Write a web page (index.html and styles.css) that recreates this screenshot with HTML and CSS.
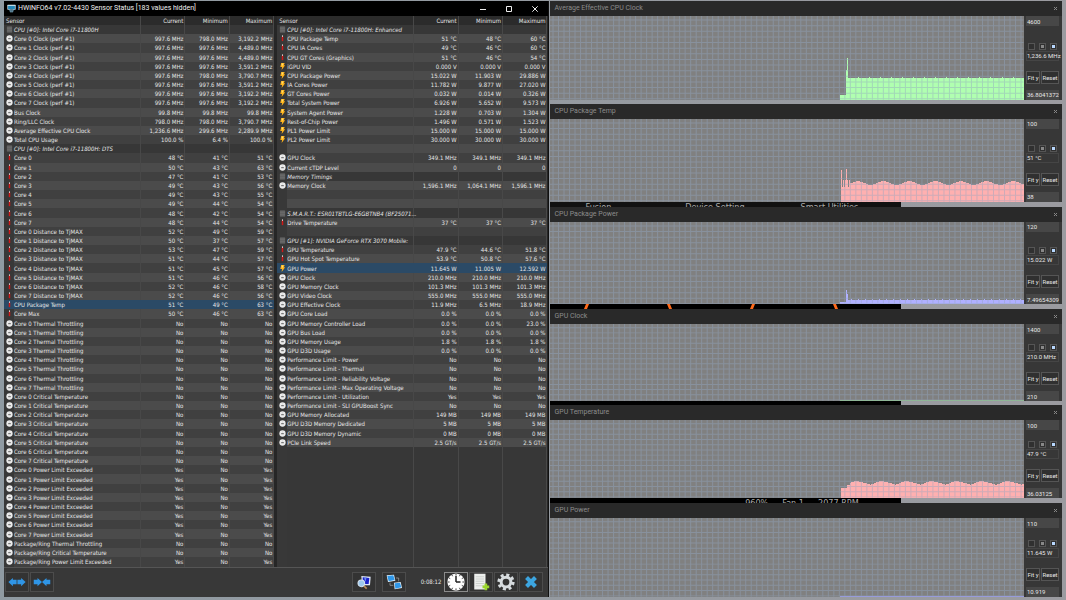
FILE: index.html
```html
<!DOCTYPE html>
<html lang="en">
<head>
    <meta charset="UTF-8">
    <title>HWiNFO64 Sensor Status</title>
    <link rel="stylesheet" href="styles.css">
</head>
<body>
<svg class="defs" aria-hidden="true">
    <symbol id="clock" viewBox="0 0 16 16"><circle cx="8" cy="8" r="7.2" fill="#ececec"/><path d="M5 8.400h6" stroke="#666" stroke-width="2.400"/><path d="M8 2.500v4" stroke="#ccc" stroke-width="1"/></symbol>
    <symbol id="temp" viewBox="0 0 16 16"><path d="M8 1v5" stroke="#eee" stroke-width="2.400"/><path d="M8 4v10" stroke="#d01818" stroke-width="3.400"/></symbol>
    <symbol id="power" viewBox="0 0 16 16"><path d="M5 0h8l-2 5h3L6 16l1-7H3z" fill="#ffb31a"/><path d="M6 1h4l-3 7z" fill="#ffe27a"/></symbol>
    <symbol id="chip" viewBox="0 0 16 16"><rect x="2" y="1" width="12" height="14" rx="1" fill="#6b6b6b"/><path d="M2 4h12M2 8h12M2 12h12" stroke="#565656" stroke-width="1"/></symbol>
</svg>

<div class="desktop">
    <main class="sensors">
        <header class="titlebar">
            <svg class="logo" viewBox="0 0 24 24"><rect x="1" y="2" width="22" height="13" rx="1" fill="#d5e9f2"/><rect x="3" y="5" width="18" height="9" fill="#2487b8"/><path d="M6 14h12l-2 8H8z" fill="#8cc4dc"/><path d="M9 14v7M12 14v7M15 14v7" stroke="#123" stroke-width="1.400"/></svg>
            <h1>HWiNFO64 v7.02-4430 Sensor Status [183 values hidden]</h1>
            <button class="win" aria-label="Minimize"><svg viewBox="0 0 10 10"><path d="M2 5.500h6"/></svg></button>
            <button class="win" aria-label="Maximize"><svg viewBox="0 0 10 10"><path d="M2.500 2.500h5v5h-5z"/></svg></button>
            <button class="win" aria-label="Close"><svg viewBox="0 0 10 10"><path d="M2.300 2.300l5.400 5.400M7.700 2.300L2.300 7.700"/></svg></button>
        </header>
        <div class="panes">
            <table id="left"></table>
            <table id="right"></table>
        </div>
        <footer class="toolbar">
            <button class="tool" aria-label="Expand columns"><svg viewBox="0 0 48 24"><path d="M1 12L13 1v5h10v12H13v5zM47 12L35 1v5H25v12h10v5z" fill="#2f95e6"/></svg></button>
            <button class="tool" aria-label="Shrink columns"><svg viewBox="0 0 48 24"><path d="M24 12L12 1v5H2v12h10v5zM24 12L36 1v5h10v12H36v5z" fill="#2f95e6"/></svg></button>
            <span class="space"></span>
            <button class="tool apart" aria-label="Summary"><svg viewBox="0 0 24 24"><path d="M8 3l14 1-1 13H9z" fill="#dfe6f5"/><path d="M10 5l10 1-1 9H10z" fill="#1b22c8"/><path d="M12 5l4 0-2 7z" fill="#6d8cf0"/><circle cx="8" cy="14" r="5" fill="#9ec9ee" stroke="#d7e4f0" stroke-width="1.600"/><path d="M12 18l4 4" stroke="#b88a58" stroke-width="2.600"/></svg></button>
            <button class="tool apart" aria-label="Network"><svg viewBox="0 0 24 24"><path d="M1 2l11-1 2 9-11 2z" fill="#eaf4fb"/><path d="M2 3l9-1 2 7-9 2z" fill="#2f97e8"/><path d="M12 13l10-1 2 9-11 2z" fill="#eaf4fb"/><path d="M13 14l8-1 2 7-9 2z" fill="#2f97e8"/><path d="M15 6h4v5M6 13v4h5" stroke="#aaa" fill="none"/></svg></button>
            <time>0:08:12</time>
            <button class="tool on" aria-label="Reset clock"><svg viewBox="0 0 24 24"><circle cx="12" cy="12" r="11.500" fill="#fff"/><path d="M12 12V4M12 12h6" stroke="#222" stroke-width="2"/><path d="M12 1v2.500M12 20.500v2.500M1 12h2.500M20.500 12H23M6.500 2.500l1 1.800M17.500 2.500l-1 1.800M2.500 6.500l1.800 1M21.500 6.500l-1.800 1M2.500 17.500l1.800-1M21.500 17.500l-1.800-1M6.500 21.500l1-1.800M17.500 21.500l-1-1.800" stroke="#333" stroke-width="1.200"/></svg></button>
            <button class="tool" aria-label="Save log"><svg viewBox="0 0 24 24"><path d="M3 1h15v21H3z" fill="#eceeec"/><path d="M5 5h11M5 8h11M5 11h11M5 14h11M5 17h11" stroke="#c3c7c3"/><path d="M14 18.500h9M18.500 14v9" stroke="#9bd62c" stroke-width="3.600"/></svg></button>
            <button class="tool" aria-label="Settings"><svg viewBox="0 0 24 24"><circle cx="12" cy="12" r="9.500" fill="none" stroke="#d7dcdf" stroke-width="4" stroke-dasharray="4 3.460"/><circle cx="12" cy="12" r="6.500" fill="none" stroke="#d7dcdf" stroke-width="4"/></svg></button>
            <button class="tool" aria-label="Close sensors"><svg viewBox="0 0 24 24"><path d="M8 8l8 8M16 8l-8 8" stroke="#3ca5e0" stroke-width="5.500" stroke-linecap="square"/></svg></button>
        </footer>
    </main>
    <div class="graphs" id="graphs"></div>
</div>
<script src="script.js"></script>
</body>
</html>
```
FILE: styles.css
```css
* { margin: 0; padding: 0; box-sizing: border-box; }
body {
    font-family: "DejaVu Sans Condensed", "Liberation Sans", sans-serif;
    font-size: 6px;
    line-height: 9px;
    color: #e6e6e6;
    background: #8f959c;
}
button, input { font: inherit; color: inherit; }
svg { display: block; }
.defs { position: absolute; width: 0; height: 0; }

.desktop {
    display: grid;
    grid-template-columns: minmax(0, 546fr) minmax(0, 512fr);
    gap: 1px;
    min-height: 100vh;
    padding: 1px 4px 3px 4px;
    background: linear-gradient(90deg, #8f9aa2 0%, #9b9ba0 100%);
}

/* sensor window */
.sensors {
    display: flex;
    flex-direction: column;
    background: #383838;
    border-right: 1px solid #111;
}
.titlebar {
    display: flex;
    align-items: center;
    height: 15px;
    padding-left: 3px;
    background: #000;
}
.logo { width: 9px; height: 9px; margin-right: 2px; }
h1, h2 {
    font: 7px/15px Roboto, "Open Sans", sans-serif;
}
h1 { flex: 1; color: #f0f0f0; }
.win { width: 26px; height: 15px; background: none; border: 0; }
.win svg { width: 10px; height: 10px; margin: 0 auto; fill: none; stroke: #eee; stroke-width: 1; }

.panes {
    flex: 1;
    display: grid;
    grid-template-columns: 1fr 1fr;
    gap: 3px;
    padding-right: 1px;
    background: #262626;
    border-bottom: 1px solid #555;
}
table {
    width: 100%;
    height: 100%;
    table-layout: fixed;
    border-spacing: 0;
    background: #383838;
}
col.ico { width: 10px; }
col.label { width: 47%; }
th { font-weight: normal; text-align: left; background: #2b2b2b; }
th, td {
    height: 9px;
    white-space: nowrap;
    border-right: 1px solid #484848;
}
th.name { padding-left: 2px; }
.num { text-align: right; padding-right: 1px; }
td { background: #404040; }
.odd td { background: #4b4b4b; }
.group td, .void td { background: #373737; }
.group .name { font-style: italic; }
tr td.ico { background: #383838; border-right: 0; }
.ico svg { width: 7px; height: 7px; margin: 0 auto; }
tr.sel td { background: #2b4a66; border-color: #2b4a66; }

.toolbar { display: flex; align-items: center; height: 29px; padding: 0 4px 2px 1px; }
.tool {
    width: 24px;
    height: 20px;
    margin-right: 1px;
    background: #333;
    border: 1px solid #4c4c4c;
}
.tool svg { width: 18px; height: 18px; margin: 0 auto; }
.apart { margin-right: 6px; }
.apart svg { width: 16px; height: 16px; }
.on { border-color: #8b8b8b; }
.space { flex: 1; }
time { margin: 0 3px 0 9px; }

/* graph windows */
.graphs {
    display: grid;
    grid-template-rows: 99fr 4px 98fr 5px 98fr 5px 92fr 4px 93fr 5px 94fr;
}
.graph { display: flex; flex-direction: column; min-height: 0; background: #373737; }
.graph header {
    display: flex;
    justify-content: space-between;
    height: 15px;
    padding: 0 4px;
    background: #292929;
    color: #8c8c8c;
}
.graph header button { width: 5px; background: none; border: 0; }
.graph header svg { width: 5px; height: 5px; stroke: #888; }
.body { flex: 1; display: flex; min-height: 0; }
.plot { flex: 1; min-width: 0; contain: size; background: #808080; }
.area { shape-rendering: crispEdges; }
.grid { stroke: #92a6c2; stroke-opacity: .45; stroke-width: 1; }
.side {
    width: 38px;
    padding: 0 3px 0 2px;
    display: flex;
    flex-direction: column;
    font-family: Roboto, "Liberation Sans", sans-serif;
}
.side input[type=text] {
    width: 100%;
    height: 10px;
    padding-left: 1px;
    background: #474747;
    border: 0;
}
.side .modes { display: flex; justify-content: space-around; margin: auto 0 1px; }
.modes input {
    appearance: none;
    width: 7px;
    height: 7px;
    border: 1px solid #555;
    background: #303030;
}
.modes input:nth-child(2) { background: #888; box-shadow: inset 0 0 0 1px #303030; }
.modes input:checked { background: #b8d8ff; box-shadow: inset 0 0 0 1px #303030; }
.side output { height: 10px; border: 1px solid #454545; line-height: 8px; white-space: nowrap; }
.acts { display: flex; gap: 1px; margin: 10px 0 6px; }
.acts button { flex: 1 1 auto; height: 13px; background: #303030; border: 1px solid #555; white-space: nowrap; }

/* what shows of the desktop between graph windows */
.gap { overflow: hidden; margin-right: 4px; font-size: 9px; line-height: 10px; color: #aaa; }
.dark { width: 69%; height: 10px; background: #111; }
.menu { display: flex; gap: 74px; padding-left: 35px; white-space: nowrap; }
.menu span + span + span { margin-left: -18px; }
.black { background: #000; }
.ticks { display: flex; justify-content: space-between; padding: 0 63px 0 34px; }
.ticks svg { width: 5px; height: 5px; fill: #ff6a1a; }
.fan { display: flex; justify-content: flex-end; gap: 14px; padding-right: 42px; }
```
FILE: script.js
```javascript
var cpu = [["g", "CPU [#0]: Intel Core i7-11800H"]];
var clockMin = ["798.0", "997.6", "997.6", "997.6", "798.0", "997.6", "997.6", "997.6"];
var clockMax = ["3,192.2", "4,489.0", "4,489.0", "3,591.2", "3,790.7", "3,591.2", "3,192.2", "3,192.2"];
var temps = ["48 41 51", "50 43 63", "47 41 53", "49 43 56", "49 43 55", "49 44 54", "48 42 54", "48 44 54"];
var dist = ["52 49 59", "50 37 57", "53 47 59", "51 44 57", "51 45 57", "51 46 56", "52 46 58", "52 46 56"];

function unit(str, u){
    return str.split(" ").map(function(v){ return u ? v + " " + u : v; });
}
function add(list, icon, name, str, u){
    list.push([icon, name].concat(unit(str, u)));
}

for(var i = 0; i < 8; i++) add(cpu, "clock", "Core " + i + " Clock (perf #1)", "997.6 " + clockMin[i] + " " + clockMax[i], "MHz");
add(cpu, "clock", "Bus Clock", "99.8 99.8 99.8", "MHz");
add(cpu, "clock", "Ring/LLC Clock", "798.0 798.0 3,790.7", "MHz");
add(cpu, "clock", "Average Effective CPU Clock", "1,236.6 299.6 2,289.9", "MHz");
add(cpu, "clock", "Total CPU Usage", "100.0 6.4 100.0", "%");
cpu.push(["g", "CPU [#0]: Intel Core i7-11800H: DTS"]);
for(i = 0; i < 8; i++) add(cpu, "temp", "Core " + i, temps[i], "°C");
for(i = 0; i < 8; i++) add(cpu, "temp", "Core " + i + " Distance to TjMAX", dist[i], "°C");
add(cpu, "temp", "CPU Package Temp", "51 49 63", "°C");
add(cpu, "temp", "Core Max", "50 46 63", "°C");
for(i = 0; i < 8; i++) add(cpu, "clock", "Core " + i + " Thermal Throttling", "No No No");
for(i = 0; i < 8; i++) add(cpu, "clock", "Core " + i + " Critical Temperature", "No No No");
for(i = 0; i < 8; i++) add(cpu, "clock", "Core " + i + " Power Limit Exceeded", "Yes No Yes");
add(cpu, "clock", "Package/Ring Thermal Throttling", "No No No");
add(cpu, "clock", "Package/Ring Critical Temperature", "No No No");
add(cpu, "clock", "Package/Ring Power Limit Exceeded", "Yes No Yes");

var gpu = [["g", "CPU [#0]: Intel Core i7-11800H: Enhanced"]];
add(gpu, "temp", "CPU Package Temp", "51 48 60", "°C");
add(gpu, "temp", "CPU IA Cores", "49 46 60", "°C");
add(gpu, "temp", "CPU GT Cores (Graphics)", "51 46 54", "°C");
add(gpu, "power", "iGPU VID", "0.000 0.000 0.000", "V");
add(gpu, "power", "CPU Package Power", "15.022 11.903 29.886", "W");
add(gpu, "power", "IA Cores Power", "11.782 9.877 27.020", "W");
add(gpu, "power", "GT Cores Power", "0.032 0.014 0.326", "W");
add(gpu, "power", "Total System Power", "6.926 5.652 9.573", "W");
add(gpu, "power", "System Agent Power", "1.228 0.703 1.304", "W");
add(gpu, "power", "Rest-of-Chip Power", "1.496 0.571 1.523", "W");
add(gpu, "power", "PL1 Power Limit", "15.000 15.000 15.000", "W");
add(gpu, "power", "PL2 Power Limit", "30.000 30.000 30.000", "W");
gpu.push([]);
add(gpu, "clock", "GPU Clock", "349.1 349.1 349.1", "MHz");
add(gpu, "clock", "Current cTDP Level", "0 0 0");
gpu.push(["g", "Memory Timings"]);
add(gpu, "clock", "Memory Clock", "1,596.1 1,064.1 1,596.1", "MHz");
gpu.push([], [], ["g", "S.M.A.R.T.: ESR01TBTLG-E6GBTNB4 (BF25071..."]);
add(gpu, "temp", "Drive Temperature", "37 37 37", "°C");
gpu.push([], ["g", "GPU [#1]: NVIDIA GeForce RTX 3070 Mobile:"]);
add(gpu, "temp", "GPU Temperature", "47.9 44.6 51.8", "°C");
add(gpu, "temp", "GPU Hot Spot Temperature", "53.9 50.8 57.6", "°C");
add(gpu, "power", "GPU Power", "11.645 11.005 12.592", "W");
add(gpu, "clock", "GPU Clock", "210.0 210.0 210.0", "MHz");
add(gpu, "clock", "GPU Memory Clock", "101.3 101.3 101.3", "MHz");
add(gpu, "clock", "GPU Video Clock", "555.0 555.0 555.0", "MHz");
add(gpu, "clock", "GPU Effective Clock", "11.9 6.5 18.9", "MHz");
add(gpu, "clock", "GPU Core Load", "0.0 0.0 0.0", "%");
add(gpu, "clock", "GPU Memory Controller Load", "0.0 0.0 23.0", "%");
add(gpu, "clock", "GPU Bus Load", "0.0 0.0 0.0", "%");
add(gpu, "clock", "GPU Memory Usage", "1.8 1.8 1.8", "%");
add(gpu, "clock", "GPU D3D Usage", "0.0 0.0 0.0", "%");
["Power", "Thermal", "Reliability Voltage", "Max Operating Voltage", "Utilization", "SLI GPUBoost Sync"].forEach(function(n){
    add(gpu, "clock", "Performance Limit - " + n, n == "Utilization" ? "Yes Yes Yes" : "No No No");
});
add(gpu, "clock", "GPU Memory Allocated", "149 149 149", "MB");
add(gpu, "clock", "GPU D3D Memory Dedicated", "5 5 5", "MB");
add(gpu, "clock", "GPU D3D Memory Dynamic", "0 0 0", "MB");
add(gpu, "clock", "PCIe Link Speed", "2.5 2.5 2.5", "GT/s");
// empty rows down to the bottom of the list
while(gpu.length < cpu.length) gpu.push(null);

function fillTable(id, rows, selected){
    var html = '<colgroup><col class="ico"><col class="label"><col><col><col></colgroup>' +
        '<thead><tr><th class="name" colspan="2">Sensor</th><th class="num">Current</th><th class="num">Minimum</th><th class="num">Maximum</th></tr></thead><tbody>';
    rows.forEach(function(r, i){
        var cls = i % 2 ? "odd" : "even";
        if(!r) cls = "void";
        else if(r[0] == "g") cls = "group";
        if(i == selected) cls = "sel";
        r = r || [];
        var icon = r[0] == "g" ? "chip" : r[0];
        html += '<tr class="' + cls + '"><td class="ico">' + (icon ? '<svg><use href="#' + icon + '"/></svg>' : '') + '</td><td class="name">' + (r[1] || '') + '</td>';
        for(var c = 2; c < 5; c++) html += '<td class="num">' + (r[c] || '') + '</td>';
        html += '</tr>';
    });
    document.getElementById(id).innerHTML = html + '</tbody>';
}
fillTable("left", cpu, 30);
fillTable("right", gpu, 26);

// series values are heights in px above the plot's bottom, x runs 0..473
function clockY(x){ return x < 290 ? 0 : x < 296 ? 5 : x < 298 ? (x == 297 ? 41 : 29) : 21 + (x * 7 % 11 == 0 ? 1 : 0); }
function tempY(x){
    if(x < 291) return 0;
    if(x == 291) return 32;
    if(x == 296) return 33;
    if(x < 300) return x % 2 ? 22 : 15;
    return Math.round(19 + 1.8 * Math.sin((x - 301) / 4.1));
}
function powerY(x){ return x < 290 ? 0 : x < 296 ? 3 : x == 296 ? 15 : x == 297 ? 11 : 5 + (x * 3 % 7 == 0 ? 1 : 0); }
function gpuTempY(x){
    if(x < 291) return 0;
    if(x < 297) return 10;
    if(x < 300) return 14;
    var p = ((x - 306) % 25 + 25) % 25;
    return p < 14 ? 18 - p * 4 / 14 : 14 + (p - 14) * 4 / 11;
}
var graphs = [
    ["Average Effective CPU Clock", "4600", "1,236.6 MHz", "36.80413728", "#b0ffb0", clockY],
    ["CPU Package Temp", "100", "51 °C", "38", "#ffb0b0", tempY],
    ["CPU Package Power", "120", "15.022 W", "7.496543097", "#b0b0ff", powerY],
    ["GPU Clock", "1400", "210.0 MHz", "210", "#8fb88f", function(x){ return x < 290 ? 0 : 1; }],
    ["GPU Temperature", "100", "47.9 °C", "36.03125", "#ffb0b0", gpuTempY],
    ["GPU Power", "110", "11.645 W", "10.919", "#9a9ae0", function(x){ return x < 290 ? 0 : 1; }]
];
var rise = '<svg viewBox="0 0 5 5"><path d="M2 0h3L3 5H0z"/></svg>';
var fall = '<svg viewBox="0 0 5 5"><path d="M0 0h3l2 5H2z"/></svg>';
var gaps = [
    '<div class="gap"></div>',
    '<div class="gap"><div class="dark menu"><span>Fusion</span><span>Device Setting</span><span>Smart Utilities</span></div></div>',
    '<div class="gap"><div class="dark black ticks">' + rise + fall + rise + fall + '</div></div>',
    '<div class="gap"><div class="dark black"></div></div>',
    '<div class="gap"><div class="dark black fan"><span>960%</span><span>Fan 1</span><span>2077 RPM</span></div></div>'
];

function plot(color, fn){
    var h = 82, d = "M0 " + h, lines = "";
    for(var x = 0; x < 473; x++) d += "V" + (h - fn(x)) + "H" + (x + 1);
    for(x = 3; x < 473; x += 5.5) lines += "M" + x + " 0V" + h;
    for(var y = h - 1; y > 0; y -= 5.5) lines += "M0 " + y + "H473";
    return '<svg class="plot" viewBox="0 0 473 82" preserveAspectRatio="none"><path class="area" fill="' + color + '" d="' + d + "V" + h + 'z"/><path class="grid" d="' + lines + '"/></svg>';
}
document.getElementById("graphs").innerHTML = graphs.map(function(g, i){
    return '<section class="graph"><header><h2>' + g[0] + '</h2><button aria-label="Close"><svg viewBox="0 0 5 5"><path d="M1 1l3 3M4 1L1 4"/></svg></button></header>' +
        '<div class="body">' + plot(g[4], g[5]) +
        '<div class="side"><input type="text" aria-label="Maximum" value="' + g[1] + '">' +
        '<div class="modes"><input type="radio" name="m' + i + '" aria-label="Small"><input type="radio" name="m' + i + '" aria-label="Medium"><input type="radio" name="m' + i + '" aria-label="Large" checked></div>' +
        '<output>' + g[2] + '</output><div class="acts"><button>Fit y</button><button>Reset</button></div>' +
        '<input type="text" aria-label="Minimum" value="' + g[3] + '"></div></div></section>' + (gaps[i] || "");
}).join("");
```
